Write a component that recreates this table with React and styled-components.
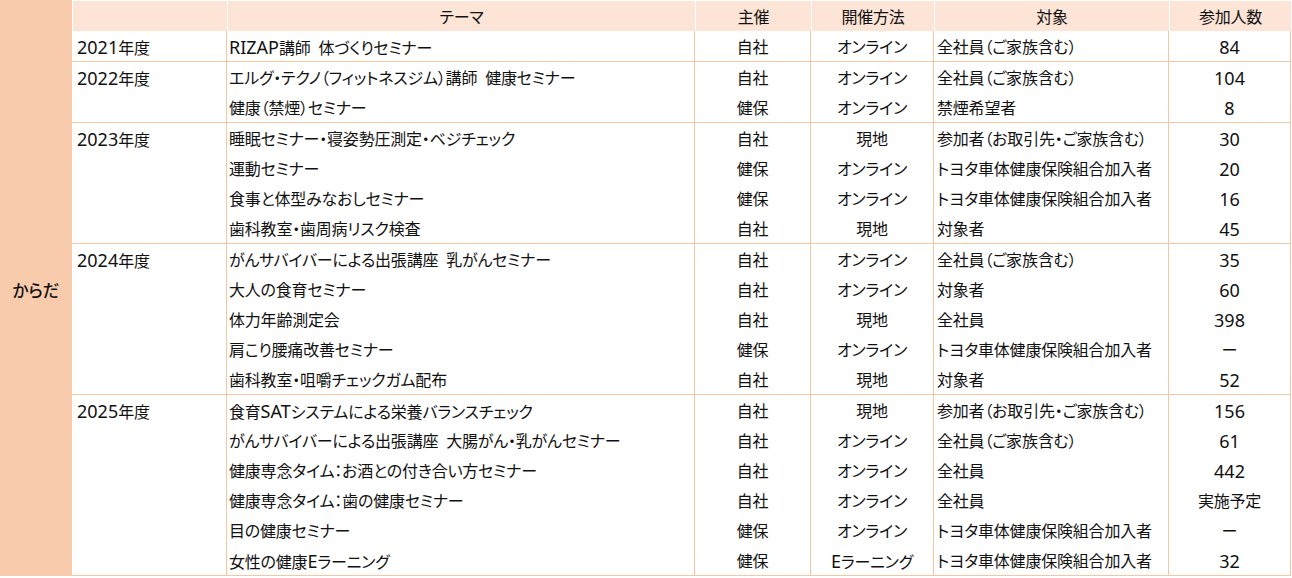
import React from 'react';
import styled, { createGlobalStyle } from 'styled-components';

const GlobalStyle = createGlobalStyle`
  body {
    margin: 0;
    background: #fff;
    font-family: "Noto Sans", "Noto Sans CJK JP", sans-serif;
    color: #111;
  }
`;

const Page = styled.div`
  display: flex;
  align-items: stretch;
  width: 1292px;
`;

const Category = styled.div`
  display: flex;
  align-items: center;
  justify-content: center;
  width: 72px;
  flex: none;
  padding-top: 4px;
  box-sizing: border-box;
  background: #f8cbad;
  font-size: 16.5px;
  font-weight: 500;
  font-feature-settings: "palt";
`;

const Table = styled.table`
  border-collapse: separate;
  border-spacing: 0;
  table-layout: fixed;
  width: 1219px;
  font-size: 16px;
  letter-spacing: -0.2px;
  font-feature-settings: "palt";
`;

const Th = styled.th`
  box-sizing: border-box;
  height: 31px;
  padding: 1px 0 0;
  background: #fce4d6;
  border-top: 1px solid #fff;
  border-left: 1px solid #fff;
  font-weight: normal;
  text-align: center;
  vertical-align: middle;
  line-height: 1;
`;

const Td = styled.td`
  box-sizing: border-box;
  height: ${p => (p.$last ? 31 : 30)}px;
  padding: 1px 0 0 ${p => p.$pad || 0}px;
  border-right: 1px solid #f8c6a2;
  border-bottom: ${p => (p.$last ? '1px solid #f8c6a2' : 'none')};
  text-align: ${p => p.$align || 'left'};
  vertical-align: middle;
  white-space: pre;
  line-height: 1;
`;

const YearCell = styled(Td)`
  vertical-align: top;
  padding-top: 7px;
  padding-left: 5px;
`;

const Latin = styled.span`
  font-size: 18px;
  letter-spacing: 0;
  line-height: 1;
`;

// wrap runs of latin letters / digits so they render at Meiryo-like size
function withLatin(text) {
  return text.split(/([0-9A-Za-z]+)/).map((part, i) =>
    /^[0-9A-Za-z]+$/.test(part) ? <Latin key={i}>{part}</Latin> : part
  );
}

const cols = [155, 468, 116, 123, 235, 122];
const headers = ['', 'テーマ', '主催', '開催方法', '対象', '参加人数'];

const ALL = '全社員（ご家族含む）';
const GUEST = '参加者（お取引先・ご家族含む）';
const KENPO = 'トヨタ車体健康保険組合加入者';

const groups = [
  {
    year: '2021年度',
    rows: [['RIZAP講師  体づくりセミナー', '自社', 'オンライン', ALL, '84']],
  },
  {
    year: '2022年度',
    rows: [
      ['エルグ・テクノ（フィットネスジム）講師  健康セミナー', '自社', 'オンライン', ALL, '104'],
      ['健康（禁煙）セミナー', '健保', 'オンライン', '禁煙希望者', '8'],
    ],
  },
  {
    year: '2023年度',
    rows: [
      ['睡眠セミナー・寝姿勢圧測定・ベジチェック', '自社', '現地', GUEST, '30'],
      ['運動セミナー', '健保', 'オンライン', KENPO, '20'],
      ['食事と体型みなおしセミナー', '健保', 'オンライン', KENPO, '16'],
      ['歯科教室・歯周病リスク検査', '自社', '現地', '対象者', '45'],
    ],
  },
  {
    year: '2024年度',
    rows: [
      ['がんサバイバーによる出張講座  乳がんセミナー', '自社', 'オンライン', ALL, '35'],
      ['大人の食育セミナー', '自社', 'オンライン', '対象者', '60'],
      ['体力年齢測定会', '自社', '現地', '全社員', '398'],
      ['肩こり腰痛改善セミナー', '健保', 'オンライン', KENPO, 'ー'],
      ['歯科教室・咀嚼チェックガム配布', '自社', '現地', '対象者', '52'],
    ],
  },
  {
    year: '2025年度',
    rows: [
      ['食育SATシステムによる栄養バランスチェック', '自社', '現地', GUEST, '156'],
      ['がんサバイバーによる出張講座  大腸がん・乳がんセミナー', '自社', 'オンライン', ALL, '61'],
      ['健康専念タイム：お酒との付き合い方セミナー', '自社', 'オンライン', '全社員', '442'],
      ['健康専念タイム：歯の健康セミナー', '自社', 'オンライン', '全社員', '実施予定'],
      ['目の健康セミナー', '健保', 'オンライン', KENPO, 'ー'],
      ['女性の健康Eラーニング', '健保', 'Eラーニング', KENPO, '32'],
    ],
  },
];

function App() {
  return (
    <Page>
      <GlobalStyle />
      <Category>からだ</Category>
      <Table>
        <colgroup>
          {cols.map((w, i) => <col key={i} style={{ width: w }} />)}
        </colgroup>
        <thead>
          <tr>
            {headers.map((h, i) => <Th key={i}>{h}</Th>)}
          </tr>
        </thead>
        <tbody>
          {groups.map(g =>
            g.rows.map((r, i) => {
              const last = i === g.rows.length - 1;
              return (
                <tr key={g.year + i}>
                  {i === 0 && (
                    <YearCell rowSpan={g.rows.length} $last>
                      {withLatin(g.year)}
                    </YearCell>
                  )}
                  <Td $last={last} $pad={2}>{withLatin(r[0])}</Td>
                  <Td $last={last} $align='center'>{r[1]}</Td>
                  <Td $last={last} $align='center'>{withLatin(r[2])}</Td>
                  <Td $last={last} $pad={3}>{r[3]}</Td>
                  <Td $last={last} $align='center'>{withLatin(r[4])}</Td>
                </tr>
              );
            })
          )}
        </tbody>
      </Table>
    </Page>
  );
}

export default App;
